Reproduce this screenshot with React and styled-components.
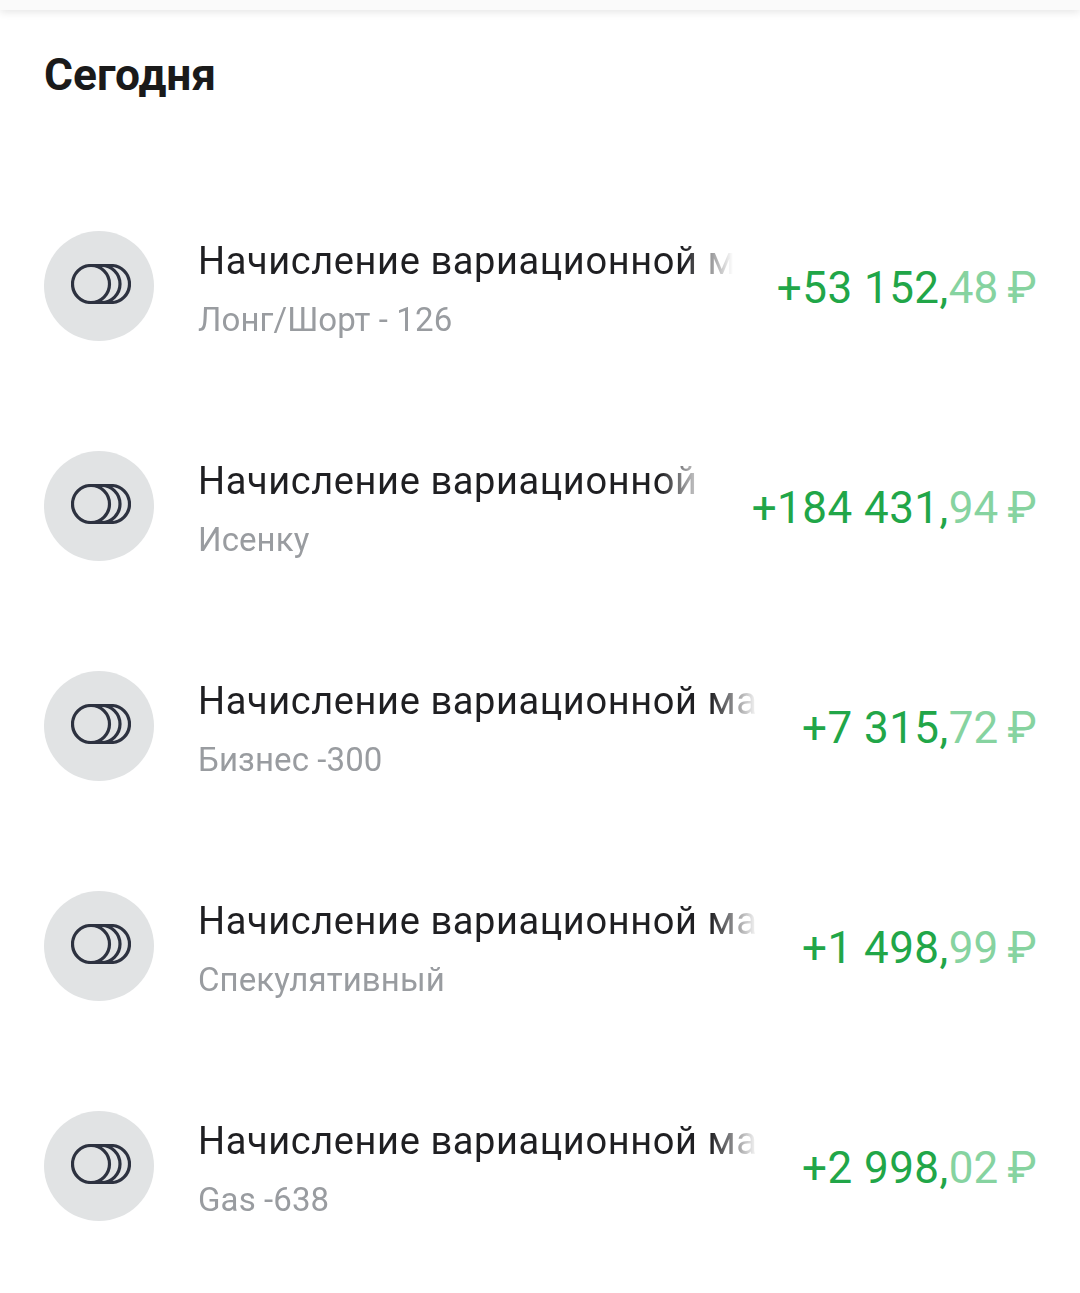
import React from 'react';
import styled, { createGlobalStyle } from 'styled-components';

const GlobalStyle = createGlobalStyle`
  html, body {
    margin: 0;
    padding: 0;
    background: #fff;
    font-family: Roboto, "Noto Sans", sans-serif;
  }
`;

const Page = styled.div`
  width: 1080px;
  height: 1293px;
  overflow: hidden;
  background: #fff;
`;

const TopBar = styled.div`
  height: 10px;
  background: #fafafa;
  box-shadow: 0 2px 8px rgba(0, 0, 0, 0.11);
`;

const Heading = styled.h1`
  margin: 0;
  padding: 40px 44px 0;
  height: 126px;
  font-size: 44.3px;
  line-height: 50px;
  font-weight: 700;
  color: #1a1a1a;
`;

const List = styled.div`
  display: flex;
  flex-direction: column;
`;

const Row = styled.div`
  display: flex;
  align-items: center;
  height: 220px;
  padding: 0 43px 0 44px;
`;

const Avatar = styled.div`
  flex: none;
  box-sizing: border-box;
  width: 110px;
  height: 110px;
  padding: 0 0 5px 3px;
  border-radius: 50%;
  background: #e1e3e4;
  display: flex;
  align-items: center;
  justify-content: center;
  margin-right: 44px;
`;

const Texts = styled.div`
  flex: 1;
  min-width: 0;
  padding-top: 6px;
  overflow: hidden;
  white-space: nowrap;
  -webkit-mask-image: linear-gradient(to right, #000 calc(100% - 48px), transparent 100%);
  mask-image: linear-gradient(to right, #000 calc(100% - 48px), transparent 100%);
`;

const Title = styled.div`
  font-size: 38px;
  line-height: 44px;
  letter-spacing: 0.6px;
  color: #1f1f22;
`;

const Subtitle = styled.div`
  margin-top: 17px;
  font-size: 33px;
  line-height: 40px;
  letter-spacing: 0.1px;
  color: #999ca0;
`;

const Amount = styled.div`
  flex: none;
  margin-left: 44px;
  padding-top: 4px;
  font-size: 44px;
  line-height: 52px;
  color: #21a648;
  letter-spacing: 0.45px;
`;

const Fraction = styled.span`
  color: #86d3a0;
  letter-spacing: 0.2px;
  word-spacing: -2px;
`;

const CoinsIcon = () => (
  <svg width="60" height="40" viewBox="0 0 60 40" fill="none" stroke="#2d3240" strokeWidth="3.2">
    <circle cx="20" cy="20" r="18.500" />
    <path d="M30.500 1.500a18.500 18.500 0 0 1 0 37" />
    <path d="M40 1.500a18.500 18.500 0 0 1 0 37" />
    <path d="M20 1.500h20M20 38.500h20" />
  </svg>
);

const rows = [
  { sub: 'Лонг/Шорт - 126', whole: '+53 152,', frac: '48' },
  { sub: 'Исенку', whole: '+184 431,', frac: '94' },
  { sub: 'Бизнес -300', whole: '+7 315,', frac: '72' },
  { sub: 'Спекулятивный', whole: '+1 498,', frac: '99' },
  { sub: 'Gas -638', whole: '+2 998,', frac: '02' },
];

const App = () => {
  return (
    <Page>
      <GlobalStyle />
      <TopBar />
      <Heading>Сегодня</Heading>
      <List>
        {rows.map((r) => (
          <Row key={r.sub}>
            <Avatar>
              <CoinsIcon />
            </Avatar>
            <Texts>
              <Title>Начисление вариационной маржи</Title>
              <Subtitle>{r.sub}</Subtitle>
            </Texts>
            <Amount>
              {r.whole}
              <Fraction>{r.frac} ₽</Fraction>
            </Amount>
          </Row>
        ))}
      </List>
    </Page>
  );
};

export default App;
